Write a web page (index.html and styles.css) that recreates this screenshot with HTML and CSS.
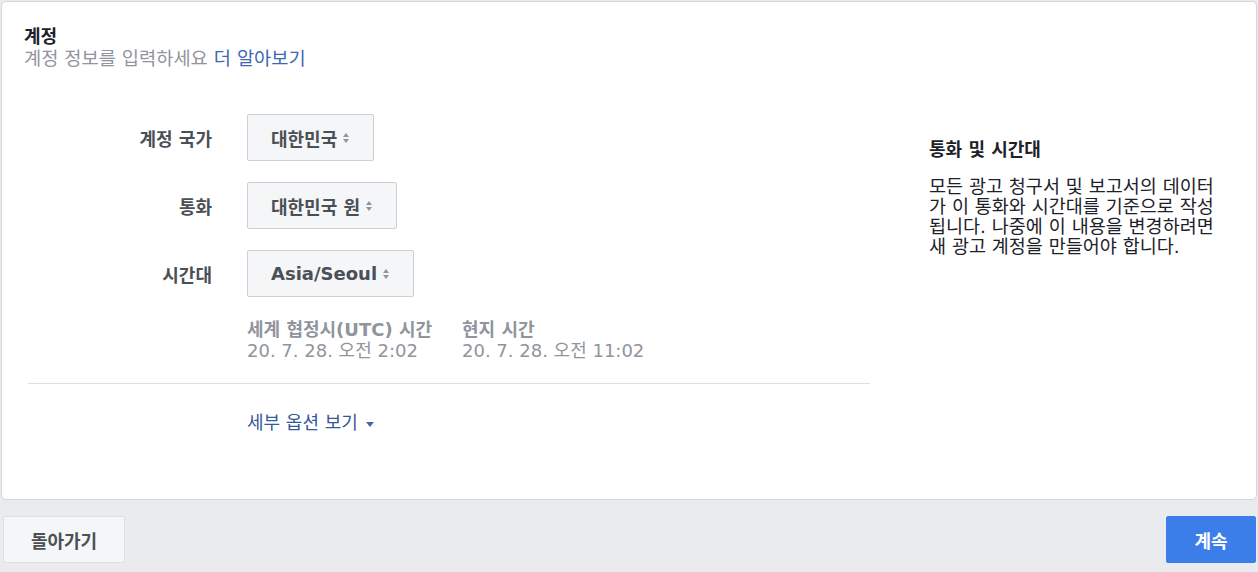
FILE: index.html
```html
<!DOCTYPE html>
<html lang="ko">
<head>
<meta charset="utf-8">
<link rel="stylesheet" href="styles.css">
</head>
<body>
<div class="card">
  <div class="header">
    <div class="title">계정</div>
    <div class="subtitle">계정 정보를 입력하세요 <a class="link">더 알아보기</a></div>
  </div>
  <div class="content">
    <div class="form">
      <div class="row">
        <div class="label">계정 국가</div>
        <div class="select">대한민국<span class="arrows"></span></div>
      </div>
      <div class="row">
        <div class="label">통화</div>
        <div class="select">대한민국 원<span class="arrows"></span></div>
      </div>
      <div class="row">
        <div class="label">시간대</div>
        <div class="select">Asia/Seoul<span class="arrows"></span></div>
      </div>
      <div class="times">
        <div class="time">
          <div class="time-head">세계 협정시(UTC) 시간</div>
          <div class="time-val">20. 7. 28. 오전 2:02</div>
        </div>
        <div class="time">
          <div class="time-head">현지 시간</div>
          <div class="time-val">20. 7. 28. 오전 11:02</div>
        </div>
      </div>
      <div class="divider"></div>
      <div class="more">세부 옵션 보기<span class="caret"></span></div>
    </div>
    <div class="aside">
      <div class="aside-title">통화 및 시간대</div>
      <p class="aside-text">모든 광고 청구서 및 보고서의 데이터<br>가 이 통화와 시간대를 기준으로 작성<br>됩니다. 나중에 이 내용을 변경하려면<br>새 광고 계정을 만들어야 합니다.</p>
    </div>
  </div>
</div>
<div class="footer">
  <button class="btn btn-back">돌아가기</button>
  <button class="btn btn-next">계속</button>
</div>
</body>
</html>
```
FILE: styles.css
```css
* { box-sizing: border-box; }
html, body { margin: 0; padding: 0; }
body {
  background: #e9ebee;
  font-family: "DejaVu Sans", "Noto Sans CJK KR", sans-serif;
  font-size: 18px;
  color: #1d2129;
  width: 1258px;
  height: 572px;
  overflow: hidden;
}
.card {
  margin: 1px 1px 0 1px;
  height: 499px;
  background: #fff;
  border: 1px solid #d3d6db;
  border-radius: 5px;
  padding: 24px 23px 0 22px;
}
.title {
  font-size: 18px;
  font-weight: 700;
  line-height: 22px;
  color: #1d2129;
}
.subtitle {
  font-size: 18.7px;
  line-height: 22px;
  color: #90949c;
}
.link { color: #4267b2; text-decoration: none; }
.content {
  display: flex;
  margin-top: 28px;
}
.form {
  flex: 0 0 842px;
  width: 842px;
  margin-left: 4px;
}
.row {
  display: flex;
  align-items: center;
  height: 47px;
  margin-top: 21px;
}
.row:first-child { margin-top: 16px; }
.label {
  width: 184px;
  text-align: right;
  margin-right: 35px;
  font-size: 18px;
  font-weight: 700;
  color: #4b4f56;
}
.select {
  display: flex;
  align-items: center;
  height: 47px;
  padding: 0 23px 0 23px;
  border: 1px solid #ccd0d5;
  border-radius: 2px;
  background: #f5f6f7;
  font-size: 18px;
  font-weight: 700;
  color: #4b4f56;
}
.arrows {
  position: relative;
  display: inline-block;
  width: 7px;
  height: 10px;
  margin-left: 6px;
}
.arrows::before, .arrows::after {
  content: "";
  position: absolute;
  left: 0;
  border-left: 3.5px solid transparent;
  border-right: 3.5px solid transparent;
}
.arrows::before { top: 0; border-bottom: 4px solid #8d949e; }
.arrows::after { bottom: 0; border-top: 4px solid #8d949e; }
.times {
  display: flex;
  gap: 30px;
  margin-left: 219px;
  margin-top: 22px;
  color: #90949c;
}
.time-head {
  font-size: 18px;
  font-weight: 700;
  line-height: 21px;
}
.time-val {
  font-size: 18px;
  line-height: 21px;
}
.divider {
  height: 1px;
  background: #dddfe2;
  margin-top: 22px;
}
.more {
  margin-left: 219px;
  margin-top: 28px;
  font-size: 18px;
  line-height: 22px;
  color: #365899;
  display: flex;
  align-items: center;
}
.caret {
  display: inline-block;
  margin-left: 8px;
  margin-top: 3px;
  border-left: 4px solid transparent;
  border-right: 4px solid transparent;
  border-top: 5px solid #4b67a1;
}
.aside {
  flex: 0 0 300px;
  margin-left: 59px;
  margin-top: 41px;
}
.aside-title {
  font-size: 18px;
  font-weight: 700;
  line-height: 22px;
}
.aside-text {
  margin: 16px 0 0 0;
  font-size: 18.5px;
  line-height: 20px;
  color: #1d2129;
}
.footer {
  display: flex;
  justify-content: space-between;
  padding: 16px 2px 0 3px;
}
.btn {
  font-family: inherit;
  font-size: 18px;
  font-weight: 700;
  height: 47px;
  border-radius: 2px;
  cursor: pointer;
}
.btn-back {
  width: 122px;
  background: #f5f6f7;
  border: 1px solid #dddfe2;
  color: #4b4f56;
}
.btn-next {
  width: 90px;
  background: #3b7de9;
  border: 1px solid #3b7de9;
  color: #fff;
}
```
